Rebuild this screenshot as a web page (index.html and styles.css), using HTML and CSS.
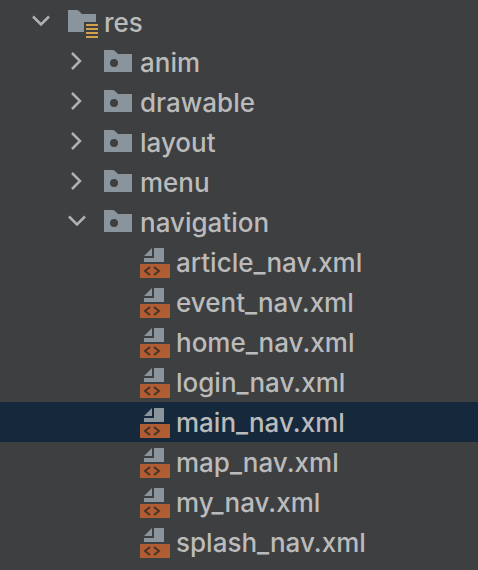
FILE: index.html
```html
<!DOCTYPE html>
<html lang="en">
<head>
<meta charset="utf-8">
<title>Project tree</title>
<link rel="stylesheet" href="styles.css">
</head>
<body>
<svg class="defs" aria-hidden="true">
  <symbol id="right" viewBox="0 0 28 40"><path class="chevron" d="M8 11l8 8-8 8"/></symbol>
  <symbol id="down" viewBox="0 0 28 40"><path class="chevron" d="M5 14.500l8 8 8-8"/></symbol>
  <symbol id="dir" viewBox="0 0 32 40"><path class="gray" fill-rule="evenodd" d="M0 8h8.500q1.500 0 2.500 1l3 3h14v18H0zM10 17a4 4 0 1 0 0 8 4 4 0 0 0 0-8z"/></symbol>
  <symbol id="res" viewBox="0 0 32 40"><path class="gray" d="M0 8h8.500q1.500 0 2.500 1l3 3h14v8H16v10H0z"/><path class="gold" d="M18 22h12v2H18zM18 26h12v2H18zM18 30h12v2H18zM18 34h12v2H18z"/></symbol>
  <symbol id="xml" viewBox="0 0 32 40"><path class="gray" d="M4 14l8-8v8zM14 6h10v14H4v-4h10z"/><path class="orange" d="M0 22h30v14H0z"/><path class="code" d="M10 25l-5 4 5 4M14 25l5 4-5 4"/></symbol>
</svg>
<ul class="tree">
  <li>
    <div class="row"><button class="toggle" aria-label="Collapse res"><svg><use href="#down"/></svg></button><svg class="icon"><use href="#res"/></svg><span class="label">res</span></div>
    <ul>
      <li><div class="row level-1"><button class="toggle" aria-label="Expand anim"><svg><use href="#right"/></svg></button><svg class="icon"><use href="#dir"/></svg><span class="label">anim</span></div></li>
      <li><div class="row level-1"><button class="toggle" aria-label="Expand drawable"><svg><use href="#right"/></svg></button><svg class="icon"><use href="#dir"/></svg><span class="label">drawable</span></div></li>
      <li><div class="row level-1"><button class="toggle" aria-label="Expand layout"><svg><use href="#right"/></svg></button><svg class="icon"><use href="#dir"/></svg><span class="label">layout</span></div></li>
      <li><div class="row level-1"><button class="toggle" aria-label="Expand menu"><svg><use href="#right"/></svg></button><svg class="icon"><use href="#dir"/></svg><span class="label">menu</span></div></li>
      <li>
        <div class="row level-1"><button class="toggle" aria-label="Collapse navigation"><svg><use href="#down"/></svg></button><svg class="icon"><use href="#dir"/></svg><span class="label">navigation</span></div>
        <ul>
          <li><div class="row file"><svg class="icon"><use href="#xml"/></svg><span class="label">article_nav.xml</span></div></li>
          <li><div class="row file"><svg class="icon"><use href="#xml"/></svg><span class="label">event_nav.xml</span></div></li>
          <li><div class="row file"><svg class="icon"><use href="#xml"/></svg><span class="label">home_nav.xml</span></div></li>
          <li><div class="row file"><svg class="icon"><use href="#xml"/></svg><span class="label">login_nav.xml</span></div></li>
          <li><div class="row file selected"><svg class="icon"><use href="#xml"/></svg><span class="label">main_nav.xml</span></div></li>
          <li><div class="row file"><svg class="icon"><use href="#xml"/></svg><span class="label">map_nav.xml</span></div></li>
          <li><div class="row file"><svg class="icon"><use href="#xml"/></svg><span class="label">my_nav.xml</span></div></li>
          <li><div class="row file"><svg class="icon"><use href="#xml"/></svg><span class="label">splash_nav.xml</span></div></li>
        </ul>
      </li>
    </ul>
  </li>
</ul>
</body>
</html>
```
FILE: styles.css
```css
body {
  margin: 0;
  background: #3d3f41;
  color: #bbbbbb;
  font: 450 26px/38px Inter, "Liberation Sans", sans-serif;
}

.defs {
  display: block;
  width: 0;
  height: 0;
}

ul {
  margin: 0;
  padding: 0;
  list-style: none;
}

.tree {
  padding-top: 2px;
}

.row {
  display: flex;
  align-items: center;
  height: 40px;
  padding-left: 28px;
  white-space: nowrap;
}

.level-1 {
  padding-left: 64px;
}

.file {
  padding-left: 140px;
}

.selected {
  background: #16283c;
}

.label {
  padding-top: 2px;
}

.toggle {
  width: 28px;
  height: 40px;
  margin-right: 12px;
  padding: 0;
  border: 0;
  background: none;
}

.toggle svg {
  display: block;
  width: 28px;
  height: 40px;
}

.icon {
  flex: none;
  width: 32px;
  height: 40px;
  margin-right: 4px;
}

.chevron {
  fill: none;
  stroke: #afb1b3;
  stroke-width: 2.5;
}

.gray {
  fill: #89949d;
}

.gold {
  fill: #d3a04d;
}

.orange {
  fill: #b15d33;
}

.code {
  fill: none;
  stroke: #4a3228;
  stroke-width: 2;
}
```
